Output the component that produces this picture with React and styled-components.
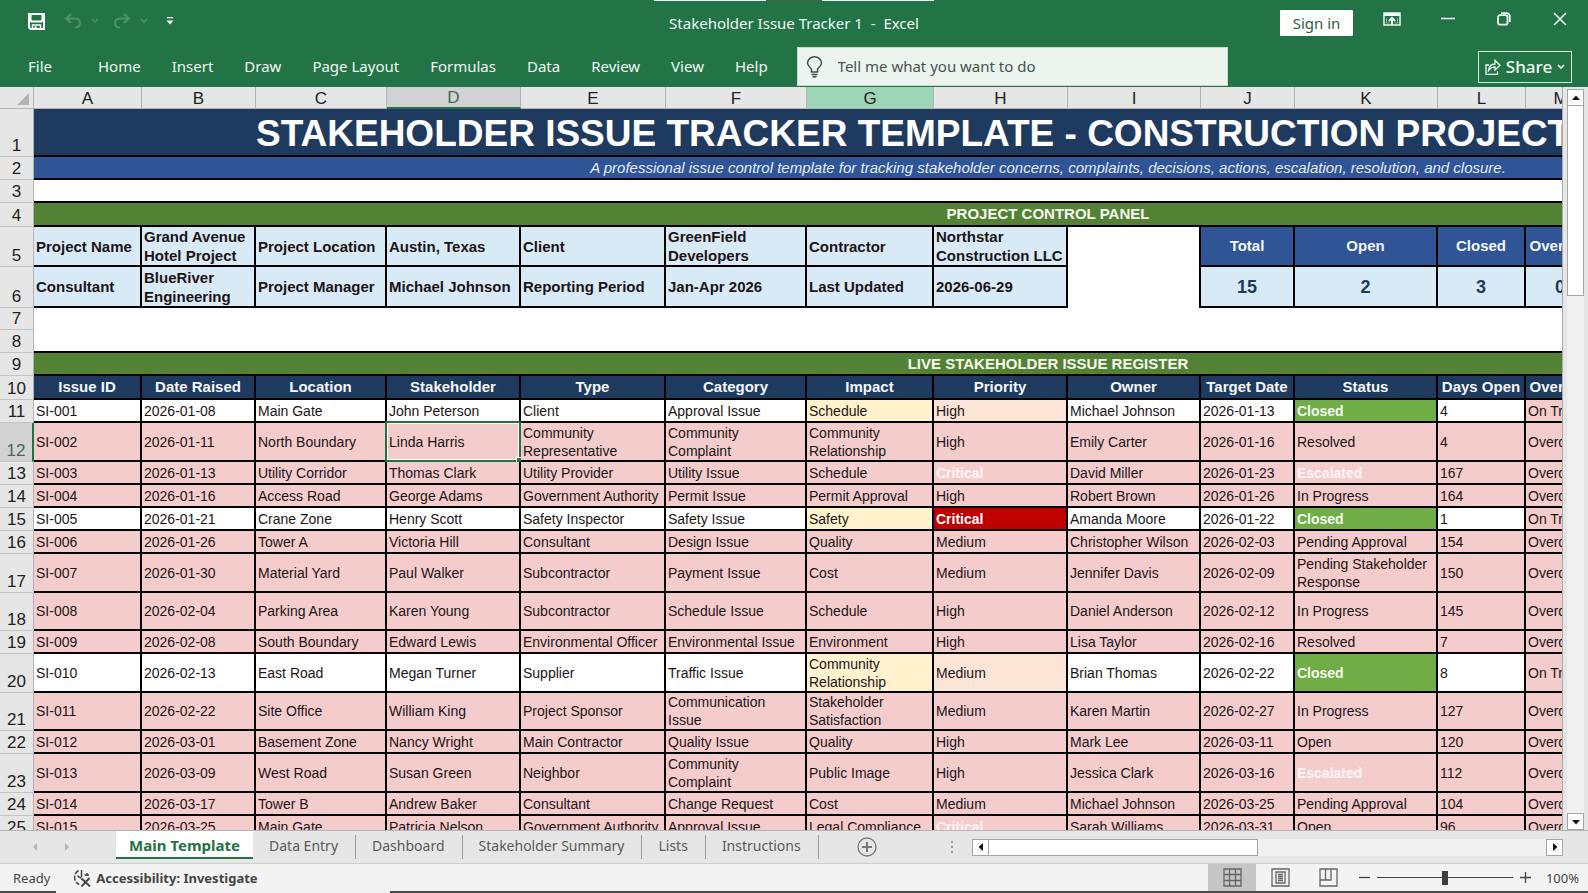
import React from 'react';
import styled, { createGlobalStyle, css } from 'styled-components';

const GlobalStyle = createGlobalStyle`
  * { box-sizing: border-box; }
  body { margin: 0; background: #e6e6e6; font-family: "Noto Sans", "Open Sans", sans-serif; }
  button, input { font: inherit; color: inherit; margin: 0; padding: 0; border: 0; background: none; }
`;

const SHEET_FONT = '"Liberation Sans", Arial, sans-serif';

const Window = styled.div`
  display: flex;
  flex-direction: column;
  height: 100vh;
  overflow: hidden;
`;

/* ---------- title bar and ribbon ---------- */

const Ribbon = styled.header`
  position: relative;
  flex: none;
  background: #227447;
  color: #f0f8f3;
`;

const TopStrip = styled.div`
  position: absolute;
  top: 0;
  left: 0;
  right: 0;
  display: flex;
  justify-content: center;
`;

const StripPart = styled.span`
  width: ${(p) => (p.$dark ? 56 : 112)}px;
  height: 1px;
  background: ${(p) => (p.$dark ? '#4a5c50' : '#eef7f1')};
`;

const TitleBar = styled.div`
  display: grid;
  grid-template-columns: 1fr auto 1fr;
  align-items: center;
  height: 46px;
  padding: 0 18px;
`;

const QuickAccess = styled.div`
  display: flex;
  align-items: center;
  align-self: start;
  height: 42px;
  padding-left: 10px;
`;

const QuickButton = styled.button`
  display: flex;
  margin-left: ${(p) => p.$gap || 0}px;
  color: ${(p) => (p.$dim ? '#4c9069' : '#ffffff')};
`;

const DocTitle = styled.h1`
  margin: 0;
  font-size: 15px;
  font-weight: 400;
  line-height: 20px;
  white-space: pre;
`;

const WindowControls = styled.div`
  display: flex;
  align-items: center;
  justify-content: flex-end;
`;

const SignIn = styled.button`
  width: 73px;
  height: 26px;
  margin-right: 29px;
  border-radius: 1px;
  background: #ffffff;
  color: #2f5d45;
  font-size: 15px;
`;

const ControlButton = styled.button`
  display: flex;
  justify-content: center;
  width: 20px;
  height: 22px;
  margin-right: ${(p) => p.$gap || 0}px;
`;

const MenuBar = styled.div`
  display: flex;
  align-items: center;
  height: 41px;
  padding: 0 16px 0 28px;
  font-size: 15px;
`;

const Menu = styled.nav`
  display: flex;
  gap: 31px;
`;

const MenuItem = styled.button`
  margin-right: ${(p) => (p.$wide ? 15 : 0)}px;
  padding-bottom: 2px;
  white-space: nowrap;
`;

const TellMe = styled.label`
  display: flex;
  align-items: center;
  gap: 15px;
  width: 431px;
  height: 39px;
  margin: 0 auto 0 29px;
  padding: 0 10px 0 8px;
  border: 1px solid #c5dccd;
  background: #ebf4ee;
  color: #454f49;
  input { flex: 1; outline: none; padding-bottom: 2px; }
  input::placeholder { color: #4a524d; opacity: 1; }
`;

const Share = styled.button`
  display: flex;
  align-items: center;
  justify-content: center;
  gap: 5px;
  width: 94px;
  height: 32px;
  border: 1px solid #d5e8dc;
  font-size: 17px;
  font-weight: 500;
`;

/* ---------- worksheet ---------- */

const SheetArea = styled.main`
  display: flex;
  flex: 1;
  min-height: 0;
  background: #e6e6e6;
`;

const Viewport = styled.div`
  flex: 1;
  min-width: 0;
  overflow: hidden;
  border-right: 1px solid #ababab;
  background: #ffffff;
`;

const Sheet = styled.table`
  width: 2066px;
  table-layout: fixed;
  border-collapse: separate;
  border-spacing: 0;
  font-family: ${SHEET_FONT};
`;

const Col = styled.col`
  width: ${(p) => p.$w}px;
`;

const Corner = styled.th`
  height: 22px;
  padding: 0 4px 3px 0;
  vertical-align: bottom;
  text-align: right;
  border-right: 1px solid #b4b4b4;
  border-bottom: 1px solid #b4b4b4;
  background: #e6e6e6;
  color: #b4b4b4;
  line-height: 0;
`;

const ColumnHead = styled.th`
  height: 22px;
  padding: 1px 0 0;
  border-right: 1px solid #b4b4b4;
  border-bottom: ${(p) => (p.$active ? '2px solid #217346' : '1px solid #b4b4b4')};
  background: ${(p) => (p.$active ? '#d2d2d2' : p.$hover ? '#9fd5b7' : '#e6e6e6')};
  color: ${(p) => (p.$active ? '#3f6b54' : '#222222')};
  font-size: 17px;
  font-weight: 400;
  line-height: 19px;
`;

const RowHead = styled.th`
  padding: 0;
  vertical-align: bottom;
  border-right: ${(p) => (p.$active ? '2px solid #217346' : '1px solid #b4b4b4')};
  border-bottom: 1px solid #c4c4c4;
  background: ${(p) => (p.$active ? '#d2d2d2' : '#e6e6e6')};
  color: ${(p) => (p.$active ? '#3f6b54' : '#222222')};
  font-size: 17px;
  font-weight: 400;
  line-height: 21px;
`;

const Row = styled.tr`
  height: ${(p) => p.$h}px;
`;

const Cell = styled.td`
  position: relative;
  padding: 0 4px 0 2px;
  border-right: 2px solid #000000;
  border-bottom: 2px solid #000000;
  vertical-align: middle;
  overflow: hidden;
  color: #1c1416;
  font-size: 14px;
  line-height: 18px;
`;

const Banner = styled(Cell)`
  text-align: center;
  color: #f4f8ee;
  background: #548235;
  font-size: 15px;
  font-weight: 700;
`;

const SheetTitle = styled(Banner)`
  padding: 4px 0 0 222px;
  text-align: left;
  white-space: nowrap;
  background: #1f3a5f;
  color: #ffffff;
  font-size: 37px;
  line-height: 42px;
`;

const Subtitle = styled(Banner)`
  background: #2f5597;
  color: #e4ecf8;
  font-weight: 400;
  font-style: italic;
`;

const Blank = styled.td`
  padding: 0;
  background: #ffffff;
  border-bottom: ${(p) => (p.$line ? '2px solid #000000' : '0')};
  border-right: ${(p) => (p.$edge ? '2px solid #000000' : '0')};
`;

const PanelCell = styled(Cell)`
  padding: 0 2px;
  background: #d9eaf7;
  font-size: 15px;
  font-weight: 700;
  line-height: 19px;
`;

const HeadCell = styled(Cell)`
  padding: 0;
  text-align: center;
  white-space: nowrap;
  background: ${(p) => (p.$kpi ? '#2f5597' : '#1f3a5f')};
  color: #f4f7fb;
  font-size: 15px;
  font-weight: 700;
`;

const KpiValue = styled(Cell)`
  padding: 0;
  text-align: center;
  background: #d9eaf7;
  color: #1f3a5f;
  font-size: 18px;
  font-weight: 700;
`;

const tones = {
  plain: css`background: #ffffff;`,
  late: css`background: #f4cccc;`,
  impact: css`background: #fff2cc;`,
  priority: css`background: #fce4d6;`,
  critical: css`background: #c00000; color: #ffffff; font-weight: 700;`,
  closed: css`background: #70ad47; color: #f6fbf2; font-weight: 700;`,
  ghost: css`background: #f4cccc; color: #fff6f6; font-weight: 700;`,
};

const DataCell = styled(Cell)`
  ${(p) => tones[p.$tone]}
  ${(p) =>
    p.$selected &&
    css`
      overflow: visible;
      &::before {
        content: '';
        position: absolute;
        inset: -2px;
        border: 2px solid #217346;
        box-shadow: inset 0 0 0 1px #ffffff;
      }
      &::after {
        content: '';
        position: absolute;
        right: -4px;
        bottom: -4px;
        width: 6px;
        height: 6px;
        background: #217346;
        outline: 1px solid #ffffff;
      }
    `}
`;

/* ---------- scroll bars ---------- */

const VScroll = styled.div`
  display: flex;
  flex-direction: column;
  flex: none;
  width: 17px;
  margin: 2px 4px 0 4px;
  background: #f1f1f1;
`;

const HScroll = styled.div`
  display: flex;
  flex: none;
  width: 38%;
  max-width: 591px;
  height: 17px;
  background: #f1f1f1;
`;

const ScrollButton = styled.button`
  display: flex;
  align-items: center;
  justify-content: center;
  flex: none;
  width: 17px;
  height: 17px;
  border: 1px solid #a6a6a6;
  background: #ffffff;
  color: #111111;
`;

const Thumb = styled.div`
  flex: none;
  background: #ffffff;
  border: 1px solid #a6a6a6;
  ${(p) => (p.$vertical ? 'height: 190px; border-top: 0;' : 'width: 269px; border-left: 0;')}
`;

const Track = styled.div`
  flex: 1;
`;

/* ---------- sheet tabs ---------- */

const TabBar = styled.footer`
  display: flex;
  align-items: center;
  flex: none;
  height: 33px;
  padding-right: 25px;
  border-top: 1px solid #b4b4b4;
  background: #e6e6e6;
  color: #5a5a5a;
  font-size: 14px;
`;

const TabArrows = styled.div`
  display: flex;
  justify-content: space-between;
  width: 116px;
  padding: 0 45px 0 31px;
  color: #b5b5b5;
`;

const Tab = styled.button`
  height: 24px;
  padding: 0 17px 3px 16px;
  border-right: 1px solid #9a9a9a;
  line-height: 20px;
  white-space: nowrap;
  ${(p) =>
    p.$active &&
    css`
      align-self: flex-start;
      height: 28px;
      width: 137px;
      padding: 2px 0 0;
      border-right: 0;
      border-bottom: 2px solid #217346;
      background: #ffffff;
      color: #217346;
      font-size: 15px;
      font-weight: 700;
    `}
`;

const AddSheet = styled.button`
  display: flex;
  margin: 0 auto 0 38px;
  color: #777777;
`;

const Grip = styled.span`
  display: flex;
  margin-right: 18px;
`;

/* ---------- status bar ---------- */

const StatusBar = styled.footer`
  display: flex;
  align-items: center;
  flex: none;
  height: 28px;
  padding: 0 9px 0 13px;
  border-top: 1px solid #cfcfcf;
  background: #f3f3f3;
  color: #444444;
  font-size: 13px;
`;

const Accessibility = styled.button`
  display: flex;
  align-items: center;
  gap: 5px;
  margin: 0 auto 0 22px;
  font-weight: 700;
`;

const ViewButton = styled.button`
  display: flex;
  align-items: center;
  justify-content: center;
  width: 48px;
  height: 27px;
  color: #666666;
  background: ${(p) => (p.$active ? '#c6c6c6' : 'transparent')};
`;

const ZoomButton = styled.button`
  display: flex;
  margin: 0 7px;
`;

const ZoomSlider = styled.input`
  width: 136px;
  height: 14px;
  appearance: none;
  background: linear-gradient(#444444, #444444) center / 100% 1px no-repeat;
  &::-webkit-slider-thumb {
    appearance: none;
    width: 6px;
    height: 14px;
    background: #3d3d3d;
  }
`;

const ZoomValue = styled.output`
  width: 41px;
  text-align: right;
`;

const BottomStrip = styled.div`
  display: grid;
  grid-template-columns: 56px 334px 1fr;
  flex: none;
  height: 2px;
`;

const BottomPart = styled.span`
  background: ${(p) => (p.$dark ? '#4a4a4a' : '#f0f0f0')};
`;

/* ---------- icons ---------- */

const Icon = ({ w, h = w, sw = 1.5, children, fill = 'none' }) => (
  <svg width={w} height={h} viewBox={`0 0 ${w} ${h}`} fill={fill} stroke={fill === 'none' ? 'currentColor' : 'none'} strokeWidth={sw} aria-hidden="true">
    {children}
  </svg>
);

const SaveIcon = () => (
  <Icon w={17} sw={2}>
    <path d="M1 1h15v15H2.500L1 14.500z" />
    <path d="M2.500 1v6l1 1.500h10l1-1.500V1" />
    <path d="M4.500 16v-4h8v4" strokeWidth="1.5" />
    <path d="M7.500 13.500V16" strokeWidth="2.500" />
  </Icon>
);
const UndoIcon = () => (
  <Icon w={18} h={16} sw={2.2}>
    <path d="M7 1 2 5.500 7 10M2 5.500h8.500c3.500 0 5.500 1.800 5.500 4.500s-2 4.500-5 4.500" />
  </Icon>
);
const RedoIcon = () => (
  <Icon w={18} h={16} sw={2.2}>
    <path d="M11 1l5 4.500-5 4.500M16 5.500H7.500C4 5.500 2 7.300 2 10s2 4.500 5 4.500" />
  </Icon>
);
const Chevron = () => (
  <Icon w={8} h={6} sw={1.6}>
    <path d="M1 1l3 3 3-3" />
  </Icon>
);
const CustomizeIcon = () => (
  <Icon w={8} h={8} fill="currentColor">
    <path d="M1 0h6v1.300H1zM.5 3.500h7L4 7.500z" />
  </Icon>
);
const RibbonIcon = () => (
  <Icon w={18} h={14} sw={1.5}>
    <path d="M1 1h16v12H1z" />
    <path d="M1 2.500h16" strokeWidth="3" />
    <path d="M9 13V7M6 9 9 6l3 3" strokeWidth="2" />
    <path d="M3.500 6v5M14.500 6v5M3.500 11h3M11.500 11h3" strokeWidth="1" opacity=".5" />
  </Icon>
);
const MinimizeIcon = () => (
  <Icon w={14} h={14} sw={1.5}>
    <path d="M0 6.500h14" />
  </Icon>
);
const RestoreIcon = () => (
  <Icon w={14} h={14} sw={1.8}>
    <rect x="1" y="3.200" width="9.500" height="9.500" rx="2" />
    <path d="M4 1.200h5.500a3.300 3.300 0 0 1 3.300 3.300V10" />
  </Icon>
);
const CloseIcon = () => (
  <Icon w={14} h={14} sw={1.6}>
    <path d="M1 1l12 12M13 1L1 13" />
  </Icon>
);
const BulbIcon = () => (
  <Icon w={17} h={22} sw={1.5}>
    <path d="M5.500 16v-2.500C5.500 11.500 1.500 10.500 1.500 7a7 6.200 0 0 1 14 0c0 3.500-4 4.500-4 6.500V16z" />
    <path d="M5.500 18.500h6M6.500 20.800h4" />
  </Icon>
);
const ShareIcon = () => (
  <Icon w={16} h={16} sw={1.3}>
    <path d="M4 6H1v9.300h11.500V12" />
    <path d="M3.500 11.500c.5-4 2.500-6.500 6.500-6.500V1.300l5 5-5 4.700V8C7 8 5 9.500 3.500 11.500z" />
  </Icon>
);
const Triangle = ({ d, w = 8 }) => (
  <Icon w={w} fill="currentColor">
    <path d={d} />
  </Icon>
);
const AccessIcon = () => (
  <Icon w={19} h={18} sw={1.5}>
    <path d="M6.500 1.500A8 8 0 0 0 7 15.500" strokeDasharray="5 1.500" />
    <path d="M9.500 1v7M5.500 6.500c1.500 2 2.500 2.500 4 2.500M15 4v3M12.500 6h4.500" />
    <path d="M9.500 9.500l8.500 8M17.500 9l-8 8.500" strokeWidth="1.9" />
  </Icon>
);
const NormalViewIcon = () => (
  <Icon w={19} sw={1.3}>
    <path d="M1 1h17v17H1zM6.500 1v17M12.500 1v17M1 6.500h17M1 12.500h17" />
  </Icon>
);
const PageViewIcon = () => (
  <Icon w={19} sw={1.3}>
    <path d="M1 1h17v17H1zM5 4h9v11H5zM7 6.500h5M7 8.500h5M7 10.500h5M7 12.500h5" />
  </Icon>
);
const BreakViewIcon = () => (
  <Icon w={19} sw={1.3}>
    <path d="M1 1h17v17H1zM6.500 1v11M1 12h11V1" />
  </Icon>
);

/* ---------- data ---------- */

const columns = [
  ['A', 108], ['B', 114], ['C', 131], ['D', 134], ['E', 145], ['F', 141], ['G', 127],
  ['H', 134], ['I', 133], ['J', 94], ['K', 143], ['L', 88], ['M', 70], ['N', 470],
];

const headings = [
  'Issue ID', 'Date Raised', 'Location', 'Stakeholder', 'Type', 'Category', 'Impact',
  'Priority', 'Owner', 'Target Date', 'Status', 'Days Open', 'Overdue',
];

const issues = [
  ['SI-001', '2026-01-08', 'Main Gate', 'John Peterson', 'Client', 'Approval Issue', 'Schedule', 'High', 'Michael Johnson', '2026-01-13', 'Closed', '4'],
  ['SI-002', '2026-01-11', 'North Boundary', 'Linda Harris', 'Community Representative', 'Community Complaint', 'Community Relationship', 'High', 'Emily Carter', '2026-01-16', 'Resolved', '4'],
  ['SI-003', '2026-01-13', 'Utility Corridor', 'Thomas Clark', 'Utility Provider', 'Utility Issue', 'Schedule', 'Critical', 'David Miller', '2026-01-23', 'Escalated', '167'],
  ['SI-004', '2026-01-16', 'Access Road', 'George Adams', 'Government Authority', 'Permit Issue', 'Permit Approval', 'High', 'Robert Brown', '2026-01-26', 'In Progress', '164'],
  ['SI-005', '2026-01-21', 'Crane Zone', 'Henry Scott', 'Safety Inspector', 'Safety Issue', 'Safety', 'Critical', 'Amanda Moore', '2026-01-22', 'Closed', '1'],
  ['SI-006', '2026-01-26', 'Tower A', 'Victoria Hill', 'Consultant', 'Design Issue', 'Quality', 'Medium', 'Christopher Wilson', '2026-02-03', 'Pending Approval', '154'],
  ['SI-007', '2026-01-30', 'Material Yard', 'Paul Walker', 'Subcontractor', 'Payment Issue', 'Cost', 'Medium', 'Jennifer Davis', '2026-02-09', 'Pending Stakeholder Response', '150'],
  ['SI-008', '2026-02-04', 'Parking Area', 'Karen Young', 'Subcontractor', 'Schedule Issue', 'Schedule', 'High', 'Daniel Anderson', '2026-02-12', 'In Progress', '145'],
  ['SI-009', '2026-02-08', 'South Boundary', 'Edward Lewis', 'Environmental Officer', 'Environmental Issue', 'Environment', 'High', 'Lisa Taylor', '2026-02-16', 'Resolved', '7'],
  ['SI-010', '2026-02-13', 'East Road', 'Megan Turner', 'Supplier', 'Traffic Issue', 'Community Relationship', 'Medium', 'Brian Thomas', '2026-02-22', 'Closed', '8'],
  ['SI-011', '2026-02-22', 'Site Office', 'William King', 'Project Sponsor', 'Communication Issue', 'Stakeholder Satisfaction', 'Medium', 'Karen Martin', '2026-02-27', 'In Progress', '127'],
  ['SI-012', '2026-03-01', 'Basement Zone', 'Nancy Wright', 'Main Contractor', 'Quality Issue', 'Quality', 'High', 'Mark Lee', '2026-03-11', 'Open', '120'],
  ['SI-013', '2026-03-09', 'West Road', 'Susan Green', 'Neighbor', 'Community Complaint', 'Public Image', 'High', 'Jessica Clark', '2026-03-16', 'Escalated', '112'],
  ['SI-014', '2026-03-17', 'Tower B', 'Andrew Baker', 'Consultant', 'Change Request', 'Cost', 'Medium', 'Michael Johnson', '2026-03-25', 'Pending Approval', '104'],
  ['SI-015', '2026-03-25', 'Main Gate', 'Patricia Nelson', 'Government Authority', 'Approval Issue', 'Legal Compliance', 'Critical', 'Sarah Williams', '2026-03-31', 'Open', '96'],
];

const issueHeights = [23, 39, 23, 23, 23, 23, 39, 38, 23, 39, 38, 23, 39, 23, 23];

const panelRows = [
  {
    n: 5, h: 40,
    cells: ['Project Name', 'Grand Avenue Hotel Project', 'Project Location', 'Austin, Texas', 'Client', 'GreenField Developers', 'Contractor', 'Northstar Construction LLC'],
    kpis: ['Total', 'Open', 'Closed', 'Overdue'],
  },
  {
    n: 6, h: 41,
    cells: ['Consultant', 'BlueRiver Engineering', 'Project Manager', 'Michael Johnson', 'Reporting Period', 'Jan-Apr 2026', 'Last Updated', '2026-06-29'],
    kpis: ['15', '2', '3', '0'],
  },
];

const menuItems = ['File', 'Home', 'Insert', 'Draw', 'Page Layout', 'Formulas', 'Data', 'Review', 'View', 'Help'];
const sheetTabs = ['Main Template', 'Data Entry', 'Dashboard', 'Stakeholder Summary', 'Lists', 'Instructions'];

function toneFor(issue, col) {
  const closed = issue[10] === 'Closed';
  const value = issue[col];
  if (value === 'Critical') return closed ? 'critical' : 'ghost';
  if (value === 'Escalated') return 'ghost';
  if (!closed || col === 12) return 'late';
  if (col === 6) return 'impact';
  if (col === 7) return 'priority';
  if (col === 10) return 'closed';
  return 'plain';
}

const IssueRow = ({ issue, number, height }) => {
  const values = [...issue, issue[10] === 'Closed' ? 'On Track' : 'Overdue'];
  const active = number === 12;
  return (
    <Row $h={height}>
      <RowHead scope="row" $active={active}>{number}</RowHead>
      {values.map((value, col) => (
        <DataCell key={col} $tone={toneFor(issue, col)} $selected={active && col === 3}>
          {value}
        </DataCell>
      ))}
    </Row>
  );
};

const Worksheet = () => (
  <Sheet>
    <colgroup>
      <Col $w={34} />
      {columns.map(([name, w]) => <Col key={name} $w={w} />)}
    </colgroup>
    <thead>
      <tr>
        <Corner aria-label="Select all">
          <Triangle w={12} d="M12 0v12H0z" />
        </Corner>
        {columns.map(([name]) => (
          <ColumnHead key={name} scope="col" $active={name === 'D'} $hover={name === 'G'}>{name}</ColumnHead>
        ))}
      </tr>
    </thead>
    <tbody>
      <Row $h={48}>
        <RowHead scope="row">1</RowHead>
        <SheetTitle colSpan={14}>STAKEHOLDER ISSUE TRACKER TEMPLATE - CONSTRUCTION PROJECT</SheetTitle>
      </Row>
      <Row $h={23}>
        <RowHead scope="row">2</RowHead>
        <Subtitle colSpan={14}>
          A professional issue control template for tracking stakeholder concerns, complaints, decisions, actions, escalation, resolution, and closure.
        </Subtitle>
      </Row>
      <Row $h={23}>
        <RowHead scope="row">3</RowHead>
        <Blank colSpan={14} $line />
      </Row>
      <Row $h={24}>
        <RowHead scope="row">4</RowHead>
        <Banner colSpan={14}>PROJECT CONTROL PANEL</Banner>
      </Row>
      {panelRows.map(({ n, h, cells, kpis }) => (
        <Row key={n} $h={h}>
          <RowHead scope="row">{n}</RowHead>
          {cells.map((text) => <PanelCell key={text}>{text}</PanelCell>)}
          <Blank $edge />
          {kpis.map((text) => (n === 5
            ? <HeadCell key={text} $kpi>{text}</HeadCell>
            : <KpiValue key={text}>{text}</KpiValue>))}
        </Row>
      ))}
      <Row $h={22}>
        <RowHead scope="row">7</RowHead>
        <Blank colSpan={14} />
      </Row>
      <Row $h={23}>
        <RowHead scope="row">8</RowHead>
        <Blank colSpan={14} $line />
      </Row>
      <Row $h={23}>
        <RowHead scope="row">9</RowHead>
        <Banner colSpan={14}>LIVE STAKEHOLDER ISSUE REGISTER</Banner>
      </Row>
      <Row $h={24}>
        <RowHead scope="row">10</RowHead>
        {headings.map((text) => <HeadCell key={text}>{text}</HeadCell>)}
      </Row>
      {issues.map((issue, i) => (
        <IssueRow key={issue[0]} issue={issue} number={i + 11} height={issueHeights[i]} />
      ))}
    </tbody>
  </Sheet>
);

export default function App() {
  return (
    <Window>
      <GlobalStyle />
      <Ribbon>
        <TopStrip><StripPart /><StripPart $dark /><StripPart /></TopStrip>
        <TitleBar>
          <QuickAccess>
            <QuickButton aria-label="Save"><SaveIcon /></QuickButton>
            <QuickButton aria-label="Undo" $dim $gap={19}><UndoIcon /></QuickButton>
            <QuickButton aria-label="Undo history" $dim $gap={9}><Chevron /></QuickButton>
            <QuickButton aria-label="Redo" $dim $gap={14}><RedoIcon /></QuickButton>
            <QuickButton aria-label="Redo history" $dim $gap={9}><Chevron /></QuickButton>
            <QuickButton aria-label="Customize Quick Access Toolbar" $gap={18}><CustomizeIcon /></QuickButton>
          </QuickAccess>
          <DocTitle>{'Stakeholder Issue Tracker 1  -  Excel'}</DocTitle>
          <WindowControls>
            <SignIn>Sign in</SignIn>
            <ControlButton aria-label="Ribbon display options" $gap={36}><RibbonIcon /></ControlButton>
            <ControlButton aria-label="Minimize" $gap={36}><MinimizeIcon /></ControlButton>
            <ControlButton aria-label="Restore" $gap={36}><RestoreIcon /></ControlButton>
            <ControlButton aria-label="Close"><CloseIcon /></ControlButton>
          </WindowControls>
        </TitleBar>
        <MenuBar>
          <Menu>
            {menuItems.map((item) => <MenuItem key={item} $wide={item === 'File'}>{item}</MenuItem>)}
          </Menu>
          <TellMe>
            <BulbIcon />
            <input type="text" aria-label="Tell me what you want to do" placeholder="Tell me what you want to do" />
          </TellMe>
          <Share><ShareIcon />Share<Chevron /></Share>
        </MenuBar>
      </Ribbon>

      <SheetArea>
        <Viewport><Worksheet /></Viewport>
        <VScroll>
          <ScrollButton aria-label="Scroll up"><Triangle d="M4 1.500 8 6H0z" /></ScrollButton>
          <Thumb $vertical />
          <Track />
          <ScrollButton aria-label="Scroll down"><Triangle d="M4 6.500 8 2H0z" /></ScrollButton>
        </VScroll>
      </SheetArea>

      <TabBar>
        <TabArrows>
          <Triangle d="M6 0v8L2 4z" />
          <Triangle d="M2 0v8l4-4z" />
        </TabArrows>
        {sheetTabs.map((name, i) => <Tab key={name} $active={i === 0}>{name}</Tab>)}
        <AddSheet aria-label="New sheet">
          <Icon w={20} sw={1.3}><circle cx="10" cy="10" r="9" /><path d="M10 5v10M5 10h10" strokeWidth="2" /></Icon>
        </AddSheet>
        <Grip>
          <Icon w={3} h={13} fill="#9a9a9a"><path d="M0 0h2v2H0zM0 5h2v2H0zM0 10h2v2H0z" /></Icon>
        </Grip>
        <HScroll>
          <ScrollButton aria-label="Scroll left"><Triangle d="M6 0v8L1.500 4z" /></ScrollButton>
          <Thumb />
          <Track />
          <ScrollButton aria-label="Scroll right"><Triangle d="M2 0v8l4.500-4z" /></ScrollButton>
        </HScroll>
      </TabBar>

      <StatusBar>
        <span>Ready</span>
        <Accessibility><AccessIcon />Accessibility: Investigate</Accessibility>
        <ViewButton aria-label="Normal view" $active><NormalViewIcon /></ViewButton>
        <ViewButton aria-label="Page layout view"><PageViewIcon /></ViewButton>
        <ViewButton aria-label="Page break preview"><BreakViewIcon /></ViewButton>
        <ZoomButton aria-label="Zoom out"><Icon w={11} sw={1.3}><path d="M0 5.500h11" /></Icon></ZoomButton>
        <ZoomSlider type="range" aria-label="Zoom" min="0" max="100" defaultValue="50" />
        <ZoomButton aria-label="Zoom in"><Icon w={11} sw={1.3}><path d="M0 5.500h11M5.500 0v11" /></Icon></ZoomButton>
        <ZoomValue>100%</ZoomValue>
      </StatusBar>
      <BottomStrip><BottomPart $dark /><BottomPart /><BottomPart $dark /></BottomStrip>
    </Window>
  );
}
